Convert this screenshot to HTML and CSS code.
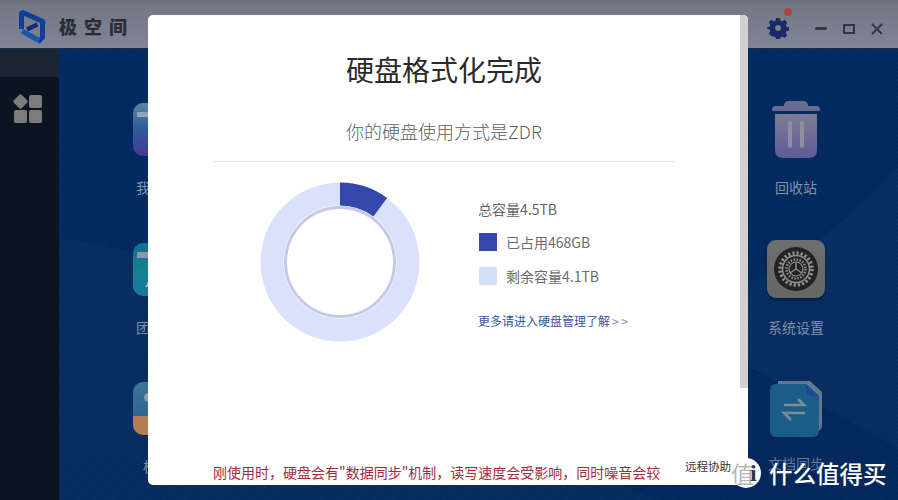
FILE: index.html
```html
<!DOCTYPE html>
<html lang="zh-CN">
<head>
<meta charset="utf-8">
<title>极空间</title>
<link rel="stylesheet" href="styles.css">
</head>
<body>
<div class="app">
  <header class="topbar">
    <div class="brand">
      <svg class="logo" viewBox="0 0 27 36" width="27" height="36" fill="none">
        <path d="M2.5 20V3L24 12.5V15" stroke="#0e3f98" stroke-width="5" stroke-linejoin="bevel"/>
        <path d="M8 20.5L18.5 15.5" stroke="#0b2f78" stroke-width="4.5"/>
        <path d="M23.5 13.5V28.5L19 33" stroke="#123f96" stroke-width="5" stroke-linejoin="bevel"/>
        <path d="M3 22L20 31.5" stroke="#1c56a8" stroke-width="5"/>
      </svg>
      <span class="brand-name">极空间</span>
    </div>
    <div class="controls">
      <span class="gear-wrap">
        <svg viewBox="0 0 24 24" width="22" height="22"><path fill="#1a2768" fill-rule="evenodd" d="M10 1h4l.7 3 1.8.8L19.3 3l2.7 3-1.7 2.7.8 1.8 2.9.7v3.6l-2.9.7-.8 1.8 1.7 2.7-2.7 3-2.8-1.8-1.8.8-.7 3h-4l-.7-3-1.8-.8L4.7 21 2 18l1.7-2.7-.8-1.8L0 12.8V11.2l2.9-.7.8-1.8L2 6l2.7-3 2.8 1.8 1.8-.8z M12 8.8a3.2 3.2 0 1 0 0 6.4 3.2 3.2 0 0 0 0-6.4z"/></svg>
        <i class="gear-dot"></i>
      </span>
      <i class="ctl-min"></i>
      <i class="ctl-max"></i>
      <svg class="ctl-close" viewBox="0 0 12 12" width="12" height="12"><path d="M1 1l10 10M11 1L1 11" stroke="#34373f" stroke-width="1.8"/></svg>
    </div>
  </header>

  <div class="workspace">
    <aside class="sidebar">
      <div class="side-top"></div>
      <div class="tiles">
        <i class="tile tile-diamond"></i><i class="tile"></i><i class="tile"></i><i class="tile"></i>
      </div>
    </aside>

    <main class="desktop">
      <svg class="swoosh" viewBox="0 0 839 452" preserveAspectRatio="none">
        <path d="M0 190 Q 170 215 300 300 T 600 452 L0 452Z" fill="#fff" fill-opacity=".018"/>
        <path d="M839 120 Q 740 230 600 270 L839 400Z" fill="#fff" fill-opacity=".018"/>
      </svg>

      <div class="app-icon at-a">
        <div class="tile-app grad-a"><i class="tab-a"></i></div>
        <span class="label">我的空间</span>
      </div>
      <div class="app-icon at-b">
        <div class="tile-app grad-b"><i class="tab-b"></i><i class="peak-b"></i></div>
        <span class="label">团队空间</span>
      </div>
      <div class="app-icon at-c">
        <div class="tile-app grad-c"><i class="dot-c"></i></div>
        <span class="label">极相册</span>
      </div>

      <div class="app-icon at-trash">
        <svg viewBox="0 0 48 58" width="48" height="58">
          <defs><linearGradient id="tb" x1="0" y1="0" x2="0" y2="1"><stop offset="0" stop-color="#7d7d95"/><stop offset="1" stop-color="#5f5b98"/></linearGradient></defs>
          <path d="M12 6 Q12 1 17 1 H31 Q36 1 36 6 Z" fill="#696d92"/>
          <path d="M3 6 H45 Q48 6 48 11 H0 Q0 6 3 6Z" fill="#696d92"/>
          <path d="M3 14 H45 V50 Q45 58 37 58 H11 Q3 58 3 50Z" fill="url(#tb)"/>
          <rect x="16" y="21" width="4" height="27" rx="2" fill="#8f8fa0"/>
          <rect x="28" y="21" width="4" height="27" rx="2" fill="#8f8fa0"/>
        </svg>
        <span class="label">回收站</span>
      </div>

      <div class="app-icon at-settings">
        <div class="tile-gear">
          <svg viewBox="0 0 44 44" width="44" height="44">
            <circle cx="22" cy="22" r="22" fill="#232323"/>
            <circle cx="22" cy="22" r="16" fill="none" stroke="#8e8e8e" stroke-width="3.5" stroke-dasharray="2.2 1.99"/>
            <circle cx="22" cy="22" r="13.5" fill="none" stroke="#8e8e8e" stroke-width="1.6"/>
            <circle cx="22" cy="22" r="9.5" fill="none" stroke="#8e8e8e" stroke-width="2.6" stroke-dasharray="1.5 1.5"/>
            <circle cx="22" cy="22" r="7" fill="none" stroke="#8e8e8e" stroke-width="1.2"/>
            <path d="M22 22V15M22 22l-6 4M22 22l6 4" stroke="#8e8e8e" stroke-width="1.5"/>
          </svg>
        </div>
        <span class="label">系统设置</span>
      </div>

      <div class="app-icon at-doc">
        <svg viewBox="0 0 52 56" width="52" height="56">
          <path d="M8 0 H40 L52 11 V44 Q52 50 46 50 H8Z" fill="#5d7a92"/>
          <path d="M6 3 H36 L49 15 V49 Q49 56 43 56 H6 Q0 56 0 49 V9 Q0 3 6 3Z" fill="#1b5c89"/>
          <path d="M36 3 L49 15 H40 Q36 15 36 11Z" fill="#1a4d8c"/>
          <path d="M14 24 H34 L28 18 M35 32 H14 L21 39" fill="none" stroke="#7c8b99" stroke-width="2.6"/>
        </svg>
        <span class="label label-dim">文档同步</span>
      </div>
    </main>
  </div>

  <section class="modal">
    <div class="modal-body">
      <h1 class="title">硬盘格式化完成</h1>
      <p class="subtitle">你的硬盘使用方式是ZDR</p>
      <hr class="rule">
      <div class="usage">
        <svg class="donut" viewBox="0 0 160 160" width="160" height="160">
          <circle cx="80" cy="80" r="68" fill="none" stroke="#dae2fb" stroke-width="23"/>
          <circle class="donut-used" cx="80" cy="80" r="68" fill="none" stroke="#3447aa" stroke-width="23" stroke-dasharray="43 384"/>
          <circle cx="80" cy="80" r="54.5" fill="none" stroke="#c4c9e6" stroke-width="3"/>
        </svg>
        <div class="legend">
          <div class="total">总容量4.5TB</div>
          <div class="legend-row"><i class="swatch swatch-used"></i><span>已占用468GB</span></div>
          <div class="legend-row"><i class="swatch swatch-free"></i><span>剩余容量4.1TB</span></div>
          <a class="more">更多请进入硬盘管理了解<span class="chev">&gt;&gt;</span></a>
        </div>
      </div>
      <p class="notice">刚使用时，硬盘会有"数据同步"机制，读写速度会受影响，同时噪音会较</p>
    </div>
    <div class="scroll-track"><div class="scroll-thumb"></div></div>
    <span class="remote">远程协助</span>
  </section>

  <div class="watermark">
    <span class="wm-badge"><span class="wm-zhi">值</span><span class="wm-i">i</span></span>
    <span class="wm-text">什么值得买</span>
  </div>
</div>
</body>
</html>
```

FILE: styles.css
```css
* { box-sizing: border-box; }
html, body { margin: 0; padding: 0; }
body {
  width: 898px;
  height: 500px;
  overflow: hidden;
  font-family: "Noto Sans CJK SC", "Noto Sans", sans-serif;
  background: #02295e;
}
.app {
  position: relative;
  width: 898px;
  height: 500px;
  display: flex;
  flex-direction: column;
  overflow: hidden;
}

/* top bar */
.topbar {
  height: 48px;
  flex: none;
  display: flex;
  align-items: center;
  justify-content: space-between;
  padding: 0 15px 0 19px;
  background: linear-gradient(#6b6e78 0, #747884 12%, #7f8496 100%);
  box-shadow: 0 1px 1px #1a2a4a;
  position: relative;
  z-index: 1;
}
.brand { display: flex; align-items: center; gap: 13px; }
.logo { margin-top: 6px; }
.brand-name {
  font-size: 18px;
  font-weight: 900;
  letter-spacing: 7px;
  color: #2b2d36;
  line-height: 24px;
  margin-top: 3px;
}
.controls { display: flex; align-items: center; margin-top: 9px; }
.gear-wrap { position: relative; width: 22px; height: 22px; margin-right: 26px; margin-left: 1px; margin-top: -2px; display: block; }
.gear-wrap svg { display: block; }
.gear-dot {
  position: absolute;
  left: 17px;
  top: -9px;
  width: 8px;
  height: 8px;
  border-radius: 50%;
  background: #a8483f;
}
.ctl-min { width: 12px; height: 3px; border-radius: 2px; background: #34373f; margin-right: 16px; }
.ctl-max { width: 12px; height: 10px; border: 2.5px solid #34373f; margin-right: 16px; }
.ctl-close { display: block; }

/* workspace */
.workspace { flex: 1; display: flex; min-height: 0; }
.sidebar { width: 59px; flex: none; background: #0a1521; }
.side-top { height: 29px; background: #1b2534; }
.tiles {
  margin: 18px 0 0 14px;
  width: 28px;
  display: grid;
  grid-template-columns: 13px 13px;
  gap: 2px;
}
.tile { height: 13px; border-radius: 2px; background: #7c7c7c; }
.tile-diamond { transform: rotate(45deg) scale(.86); }

.desktop {
  flex: 1;
  position: relative;
  background:
    repeating-linear-gradient(135deg, rgba(255,255,255,.018) 0 1px, transparent 1px 3px),
    linear-gradient(#012a60, #03275c);
}
.swoosh { position: absolute; inset: 0; width: 100%; height: 100%; }
.app-icon {
  position: absolute;
  width: 80px;
  display: flex;
  flex-direction: column;
  align-items: center;
}
.app-icon svg { display: block; }
.label {
  font-size: 14px;
  line-height: 20px;
  color: #8092a8;
  white-space: nowrap;
}
.label-dim { color: #66799a; }
.at-a { left: 65px; top: 55px; }
.at-b { left: 65px; top: 195px; }
.at-c { left: 65px; top: 334px; }
.at-a .label, .at-b .label, .at-c .label { margin-top: 21px; }
.at-trash { left: 697px; top: 52px; }
.at-trash .label { margin-top: 19px; }
.at-settings { left: 697px; top: 192px; }
.at-settings .label { margin-top: 19px; }
.at-doc { left: 697px; top: 333px; }
.at-doc .label { margin-top: 16px; }

.tile-app { width: 62px; height: 53px; border-radius: 10px; position: relative; overflow: hidden; }
.grad-a { background: linear-gradient(#5f86a8, #2f5f96 45%, #45399a); }
.tab-a { position: absolute; left: 4px; right: 0; top: 9px; height: 5px; background: #8fa6b8; }
.grad-b { background: linear-gradient(#0f6f94, #168190 50%, #1a77a0); }
.tab-b { position: absolute; left: 4px; right: 0; top: 9px; height: 6px; background: #8d97a4; }
.peak-b { position: absolute; left: 12px; top: 37px; width: 0; height: 0; border: 4px solid transparent; border-top: 0; border-bottom: 7px solid #9ab4bd; }
.grad-c { background: linear-gradient(#3c7398 0, #2d6690 65%, #b57d50 65%, #b57d50); }
.dot-c { position: absolute; left: 11px; top: 11px; width: 9px; height: 9px; border-radius: 50%; background: #8d9cab; }
.tile-gear {
  width: 58px;
  height: 58px;
  border-radius: 9px;
  background: linear-gradient(#6e6e6e, #666);
  display: flex;
  align-items: center;
  justify-content: center;
  box-shadow: 0 2px 3px rgba(0,0,0,.35);
}

/* modal */
.modal {
  position: absolute;
  left: 148px;
  top: 15px;
  width: 600px;
  height: 470px;
  background: #fff;
  border-radius: 5px;
  display: flex;
  overflow: hidden;
  z-index: 2;
}
.modal-body {
  flex: 1;
  padding: 34px 65px 0;
  display: flex;
  flex-direction: column;
  min-width: 0;
}
.title {
  margin: 0;
  font-size: 28px;
  font-weight: 400;
  line-height: 40px;
  color: #2a2a2a;
  text-align: center;
}
.subtitle {
  margin: 29px 0 0;
  font-size: 18px;
  font-weight: 300;
  line-height: 26px;
  color: #5f5f5f;
  text-align: center;
}
.rule { width: 100%; margin: 17px 0 0; border: 0; border-top: 1px solid #e6e6e6; }
.usage { display: flex; margin: 20px 0 0 47px; }
.donut { display: block; flex: none; }
.donut-used { transform: rotate(-90deg); transform-origin: 80px 80px; }
.legend { margin: 17px 0 0 58px; display: flex; flex-direction: column; }
.total { font-size: 14px; line-height: 20px; color: #666; }
.legend-row {
  display: flex;
  align-items: center;
  gap: 9px;
  height: 18px;
  margin-top: 14px;
  padding-left: 1px;
  font-size: 14px;
  color: #6c6c6c;
}
.legend-row + .legend-row { margin-top: 16px; }
.swatch { width: 18px; height: 18px; flex: none; }
.swatch-used { background: #3447aa; }
.swatch-free { background: #d5e0f8; }
.more { margin-top: 27px; font-size: 12px; line-height: 18px; color: #38549f; white-space: nowrap; }
.chev { margin-left: 2px; letter-spacing: 2.5px; color: #7686b5; }
.notice {
  margin: auto 0 3px;
  font-size: 14px;
  line-height: 20px;
  color: #a02c40;
  white-space: nowrap;
}
.scroll-track { width: 8px; flex: none; background: #fff; }
.scroll-thumb { height: 373px; background: #d0d0d0; }
.remote {
  position: absolute;
  left: 537px;
  top: 442px;
  font-size: 11.5px;
  line-height: 18px;
  color: #333;
  white-space: nowrap;
}

/* watermark */
.watermark {
  position: absolute;
  left: 731px;
  top: 458px;
  display: flex;
  align-items: center;
  gap: 8px;
  z-index: 3;
}
.wm-badge {
  width: 30px;
  height: 30px;
  border-radius: 50%;
  background: #fff;
  position: relative;
  overflow: hidden;
  display: block;
}
.wm-zhi { position: absolute; left: 0; top: 0; font-size: 23px; line-height: 30px; color: #b5b5b5; }
.wm-i { position: absolute; left: 19px; top: 2px; font-family: "Liberation Serif", serif; font-weight: 700; font-size: 24px; line-height: 26px; color: #2d3a4a; }
.wm-text { font-size: 23.5px; line-height: 30px; font-weight: 500; color: #fff; white-space: nowrap; }
```
